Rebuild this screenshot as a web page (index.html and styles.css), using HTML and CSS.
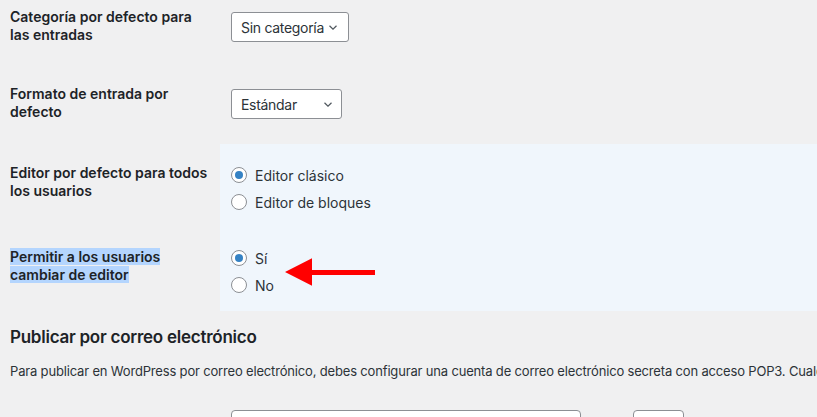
FILE: index.html
```html
<!DOCTYPE html>
<html lang="es">
<head>
    <meta charset="UTF-8">
    <meta name="viewport" content="width=device-width, initial-scale=1.0">
    <title>Ajustes de escritura</title>
    <link rel="stylesheet" href="styles.css">
</head>
<body>
    <div class="wrap">
        <div class="form-table">
            <div class="row row-first">
                <div class="row-label">Categoría por defecto para las entradas</div>
                <div class="row-field">
                    <div class="select select-cat">
                        <span>Sin categoría</span>
                        <svg class="chevron" width="8" height="5" viewBox="0 0 8 5"><path d="M0.5 0.8l3.5 3.4 3.5-3.4" fill="none" stroke="#50575e" stroke-width="1.2"/></svg>
                    </div>
                </div>
            </div>

            <div class="row row-second">
                <div class="row-label">Formato de entrada por defecto</div>
                <div class="row-field">
                    <div class="select select-format">
                        <span>Estándar</span>
                        <svg class="chevron" width="8" height="5" viewBox="0 0 8 5"><path d="M0.5 0.8l3.5 3.4 3.5-3.4" fill="none" stroke="#50575e" stroke-width="1.2"/></svg>
                    </div>
                </div>
            </div>

            <div class="row row-editor">
                <div class="row-label">Editor por defecto para todos los usuarios</div>
                <div class="row-field highlight">
                    <label class="radio"><span class="dot checked"></span>Editor clásico</label>
                    <label class="radio"><span class="dot"></span>Editor de bloques</label>
                </div>
            </div>

            <div class="row row-switch">
                <div class="row-label"><span class="selected">Permitir a los usuarios</span><br><span class="selected">cambiar de editor</span></div>
                <div class="row-field highlight">
                    <label class="radio"><span class="dot checked"></span>Sí</label>
                    <label class="radio"><span class="dot"></span>No</label>
                    <!-- annotation arrow drawn over the row -->
                    <svg class="arrow" width="92" height="30" viewBox="0 0 92 30">
                        <polygon points="1,15 28,1.3 28,13 91,13 91,18 28,18 28,28.7" fill="#ff0000"/>
                    </svg>
                </div>
            </div>
        </div>

        <h2>Publicar por correo electrónico</h2>
        <p class="description">Para publicar en WordPress por correo electrónico, debes configurar una cuenta de correo electrónico secreta con acceso POP3. Cualquier correo recibido en esta dirección será publicado.</p>

        <div class="row row-mail">
            <div class="row-label"></div>
            <div class="row-field mail-fields">
                <div class="input input-server"></div>
                <div class="input input-port"></div>
            </div>
        </div>
    </div>
</body>
</html>
```

FILE: styles.css
```css
html {
    overflow: hidden;
}
body {
    font-family: Inter, "Noto Sans", sans-serif;
    background-color: #f0f0f1;
    color: #1d2327;
    font-size: 13px;
    margin: 0;
    padding: 0;
}
.row {
    display: flex;
}
.row-label {
    width: 200px;
    flex-shrink: 0;
    padding: 20px 10px 0 10px;
    font-size: 14px;
    font-weight: 600;
    line-height: 18.2px;
}
.row-field {
    flex: 1;
    padding-left: 10px;
    font-size: 14px;
    color: #2c3338;
}
.row-first {
    height: 65px;
}
.row-first .row-label {
    padding-top: 8px;
}
.row-first .row-field {
    padding-top: 12px;
}
.row-second {
    height: 79px;
}
.row-second .row-field {
    padding-top: 24px;
}
.row-editor {
    height: 84px;
}
.row-editor .row-field {
    padding-top: 21px;
}
.row-switch {
    height: 83px;
}
.row-switch .row-field {
    padding-top: 20px;
}
.highlight {
    background-color: #f0f6fc;
    position: relative;
}
.selected {
    background-color: #b4d5fe;
}

/* fake selects */
.select {
    display: inline-flex;
    align-items: center;
    justify-content: space-between;
    box-sizing: border-box;
    height: 30px;
    margin-left: 1px;
    padding: 0 11px 0 9px;
    background-color: #fff;
    border: 1px solid #8c8f94;
    border-radius: 3px;
    color: #2c3338;
    letter-spacing: -0.3px;
}
.select-cat {
    width: 118px;
}
.select-format {
    width: 111px;
    padding-right: 9px;
}
.chevron {
    display: block;
    flex-shrink: 0;
}

/* radios */
.radio {
    display: flex;
    align-items: center;
    height: 20px;
    margin-bottom: 7px;
    margin-left: 1px;
}
.dot {
    box-sizing: border-box;
    width: 16px;
    height: 16px;
    margin-right: 8px;
    border: 1px solid #8c8f94;
    border-radius: 50%;
    background-color: #fff;
    display: flex;
    align-items: center;
    justify-content: center;
}
.dot.checked::before {
    content: "";
    width: 8px;
    height: 8px;
    border-radius: 50%;
    background-color: #3582c4;
}
.arrow {
    position: absolute;
    left: 64px;
    top: 29px;
}

h2 {
    font-size: 17px;
    font-weight: 600;
    line-height: 22px;
    letter-spacing: -0.25px;
    margin: 15px 0 0 10px;
}
.description {
    margin: 14px 0 0 10px;
    line-height: 19px;
    letter-spacing: -0.17px;
    white-space: nowrap;
    color: #2c3338;
}
.row-mail .row-label {
    padding-top: 0;
}
.mail-fields {
    display: flex;
    gap: 52px;
    padding-top: 29px;
    padding-left: 11px;
}
.input {
    box-sizing: border-box;
    height: 30px;
    background-color: #fff;
    border: 1px solid #8c8f94;
    border-radius: 4px;
}
.input-server {
    width: 350px;
}
.input-port {
    width: 51px;
}
```
